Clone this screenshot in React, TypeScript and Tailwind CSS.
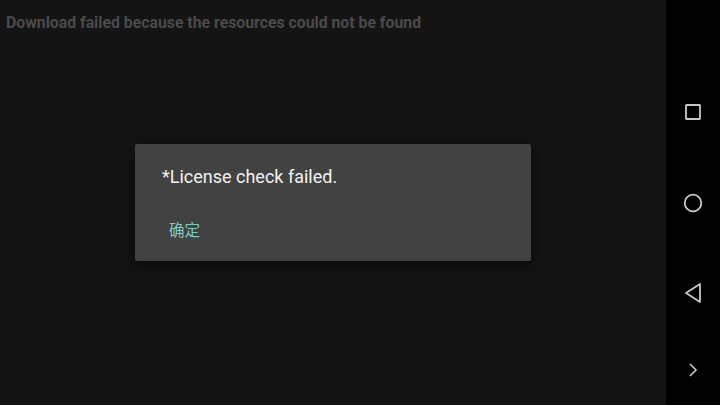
export default function App() {
  return (
    <div className="flex h-[405px] w-[720px] overflow-hidden bg-[#141414] font-['Roboto',sans-serif]">
      {/* App content */}
      <div className="relative flex flex-1 flex-col">
        <div className="px-[6px] pt-[13px] text-[15.8px] font-bold leading-[20px] text-[#4a4a4a]">
          Download failed because the resources could not be found
        </div>

        {/* Dialog */}
        <div className="mt-[111px] ml-[135px] w-[396px] rounded-[2px] bg-[#424242] shadow-[0_4px_16px_rgba(0,0,0,0.6)]">
          <div className="px-[27px] pt-[22px] text-[18px] leading-[22px] text-[#f2f2f2]">
            *License check failed.
          </div>
          <div className="px-[34px] pt-[33px] pb-[20px] font-['Roboto','Noto_Sans_CJK_SC',sans-serif] text-[15.5px] leading-[20px] text-[#80cbc4]">
            确定
          </div>
        </div>
      </div>

      {/* Navigation bar */}
      <div className="flex w-[54px] flex-col items-center bg-black pt-[104px]">
        <svg width="18" height="18" viewBox="0 0 18 18" className="mt-[-1px]">
          <rect x="2" y="2" width="14" height="14" rx="0.5" fill="none" stroke="#c8c8c8" strokeWidth="1.8" />
        </svg>
        <svg width="20" height="20" viewBox="0 0 20 20" className="mt-[72px]">
          <circle cx="10" cy="10" r="8.3" fill="none" stroke="#c8c8c8" strokeWidth="1.8" />
        </svg>
        <svg width="18" height="22" viewBox="0 0 18 22" className="mt-[69px]">
          <path d="M16 2 L2 11 L16 20 Z" fill="none" stroke="#c8c8c8" strokeWidth="1.8" strokeLinejoin="round" />
        </svg>
        <svg width="10" height="16" viewBox="0 0 10 16" className="mt-[58px]">
          <path d="M2 2 L8 8 L2 14" fill="none" stroke="#c8c8c8" strokeWidth="1.6" />
        </svg>
      </div>
    </div>
  )
}
